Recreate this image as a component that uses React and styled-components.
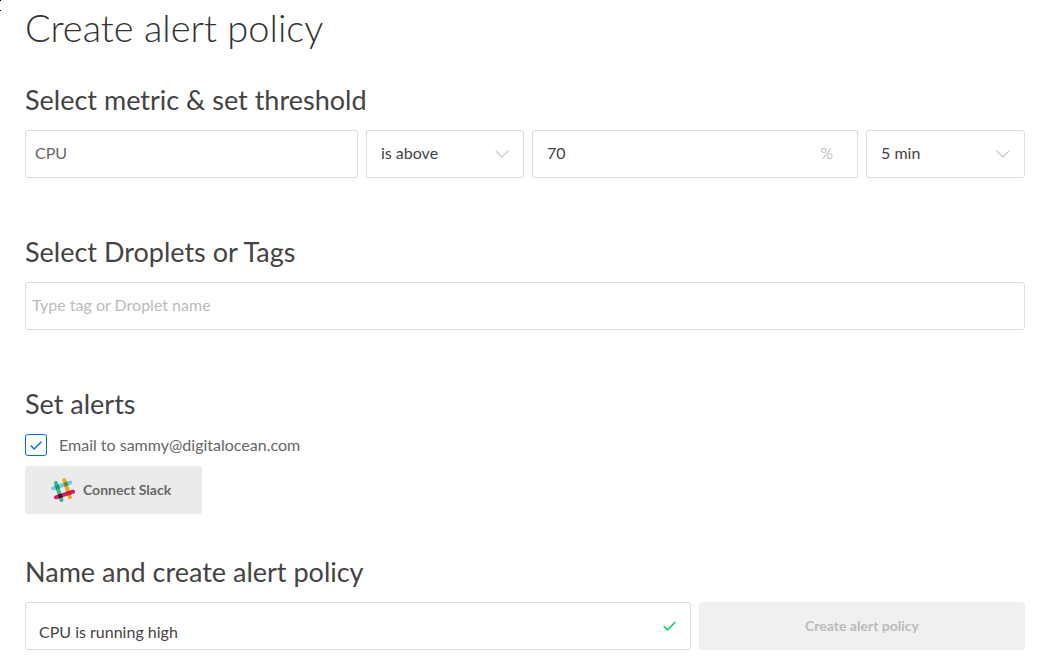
import React from "react";
import styled, { createGlobalStyle } from "styled-components";

const GlobalStyle = createGlobalStyle`
  *, *::before, *::after { box-sizing: border-box; }
  body {
    margin: 0;
    background: #fff;
    color: #444;
    font: 16px/24px Lato, "Liberation Sans", sans-serif;
  }
  input, select, button { font: inherit; color: inherit; margin: 0; }
`;

const Page = styled.form`
  padding: 3px 20px 20px 25px;
`;

const CornerMark = styled.svg`
  position: absolute;
  top: 0;
  left: 0;
`;

const Title = styled.h1`
  margin: 0;
  color: #333;
  font-size: 38px;
  line-height: 48px;
  font-weight: 300;
`;

const Section = styled.section`
  margin-top: ${(p) => p.$space}px;
`;

const Heading = styled.h2`
  margin: 0 0 14px;
  font-size: 27px;
  line-height: 32px;
  font-weight: 400;
`;

const Row = styled.div`
  display: grid;
  grid-template-columns: ${(p) => p.$columns};
  gap: 8px;
`;

const Field = styled.label`
  display: flex;
  align-items: center;
  min-width: 0;
  height: 48px;
  padding: 0 14px 0 ${(p) => p.$inset}px;
  border: 1px solid #dcdcdc;
  border-radius: 3px;
  background: #fff;
`;

const TextInput = styled.input`
  flex: 1;
  min-width: 0;
  height: 46px;
  padding: ${(p) => (p.$low ? 14 : 0)}px 0 4px;
  border: 0;
  outline: 0;
  background: transparent;
  color: ${(p) => (p.$muted ? "#676767" : "#444")};

  &::placeholder { color: #bbb; opacity: 1; }
`;

const Select = styled.select`
  flex: 1;
  min-width: 0;
  height: 46px;
  padding: 0 0 2px;
  border: 0;
  outline: 0;
  appearance: none;
  background: transparent;
`;

const Unit = styled.span`
  padding: 0 10px 2px 0;
  color: #999;
  font-weight: 300;
`;

const CheckRow = styled.label`
  display: flex;
  align-items: center;
  gap: 12px;
  height: 22px;
  margin-bottom: 10px;
  color: #676767;
`;

const CheckBox = styled.span`
  display: grid;
  width: 22px;
  height: 22px;
  border: 1px solid #0069ff;
  border-radius: 3px;

  & > * { grid-area: 1 / 1; place-self: center; }
`;

const CheckInput = styled.input`
  width: 20px;
  height: 20px;
  appearance: none;

  &:not(:checked) + svg { visibility: hidden; }
`;

const Button = styled.button`
  display: flex;
  align-items: center;
  justify-content: center;
  gap: 8px;
  height: 48px;
  padding: ${(p) => (p.$withIcon ? "0 31px 0 26px" : "0 26px")};
  border: 0;
  border-radius: 3px;
  font-size: 14px;
  font-weight: 700;
  background: #ebebeb;
  color: #676767;

  &:disabled { background: #f0f0f0; color: #bbb; }
`;

const Chevron = () => (
  <svg width="14" height="8" viewBox="0 0 14 8" fill="none" stroke="#ccc" strokeWidth="1.3" aria-hidden="true">
    <path d="M0.7 0.8 7 7 13.3 0.8" />
  </svg>
);

const Tick = ({ width, height, color, thickness }) => (
  <svg width={width} height={height} viewBox="0 0 12 9" fill="none" stroke={color} strokeWidth={thickness} aria-hidden="true">
    <path d="M0.7 4.6 4.2 8 11.4 0.8" />
  </svg>
);

const SlackMark = () => (
  <svg width="24" height="24" viewBox="0 0 24 24" fill="none" strokeWidth="4" strokeLinecap="round" aria-hidden="true">
    <path d="M2.2 10.3 19.3 4.7" stroke="#70cadb" />
    <path d="M13.3 2.2 18.9 19.2" stroke="#e9a820" />
    <path d="M4.9 5 10.5 22" stroke="#3eb890" />
    <path d="M5 19.3 22 13.7" stroke="#e01563" />
    <g strokeWidth="4" strokeLinecap="butt">
      <path d="M4.5 9.5 8.3 8.3" stroke="#1d8f79" />
      <path d="M13 6.8 16.8 5.5" stroke="#66863b" />
      <path d="M7.4 18.5 11.2 17.3" stroke="#361238" />
      <path d="M15.8 15.7 19.6 14.5" stroke="#cb2027" />
    </g>
  </svg>
);

export default function App() {
  return (
    <>
      <GlobalStyle />
      <CornerMark width="1" height="11" viewBox="0 0 1 11" aria-hidden="true">
        <path d="M0 0H1V1H0ZM0 10H1V11H0Z" fill="#000" />
      </CornerMark>
      <Page onSubmit={(e) => e.preventDefault()}>
        <Title>Create alert policy</Title>

        <Section $space={33}>
          <Heading>Select metric &amp; set threshold</Heading>
          <Row $columns="333fr 158fr 326fr 159fr">
            <Field $inset={9}>
              <TextInput $muted aria-label="Metric" defaultValue="CPU" />
            </Field>
            <Field $inset={14}>
              <Select aria-label="Comparison" defaultValue="is above">
                <option>is above</option>
                <option>is below</option>
              </Select>
              <Chevron />
            </Field>
            <Field $inset={14}>
              <TextInput aria-label="Threshold" defaultValue="70" />
              <Unit>%</Unit>
            </Field>
            <Field $inset={14}>
              <Select aria-label="Duration" defaultValue="5 min">
                <option>5 min</option>
                <option>10 min</option>
              </Select>
              <Chevron />
            </Field>
          </Row>
        </Section>

        <Section $space={58}>
          <Heading>Select Droplets or Tags</Heading>
          <Field $inset={6}>
            <TextInput aria-label="Droplets or tags" placeholder="Type tag or Droplet name" />
          </Field>
        </Section>

        <Section $space={58}>
          <Heading>Set alerts</Heading>
          <CheckRow>
            <CheckBox>
              <CheckInput type="checkbox" defaultChecked />
              <Tick width={12} height={9} color="#0069ff" thickness={1.4} />
            </CheckBox>
            Email to sammy@digitalocean.com
          </CheckRow>
          <Button type="button" $withIcon>
            <SlackMark />
            Connect Slack
          </Button>
        </Section>

        <Section $space={42}>
          <Heading>Name and create alert policy</Heading>
          <Row $columns="666fr 326fr">
            <Field $inset={13}>
              <TextInput $low aria-label="Policy name" defaultValue="CPU is running high" />
              <Tick width={13} height={10} color="#15cd72" thickness={1.5} />
            </Field>
            <Button type="submit" disabled>Create alert policy</Button>
          </Row>
        </Section>
      </Page>
    </>
  );
}
